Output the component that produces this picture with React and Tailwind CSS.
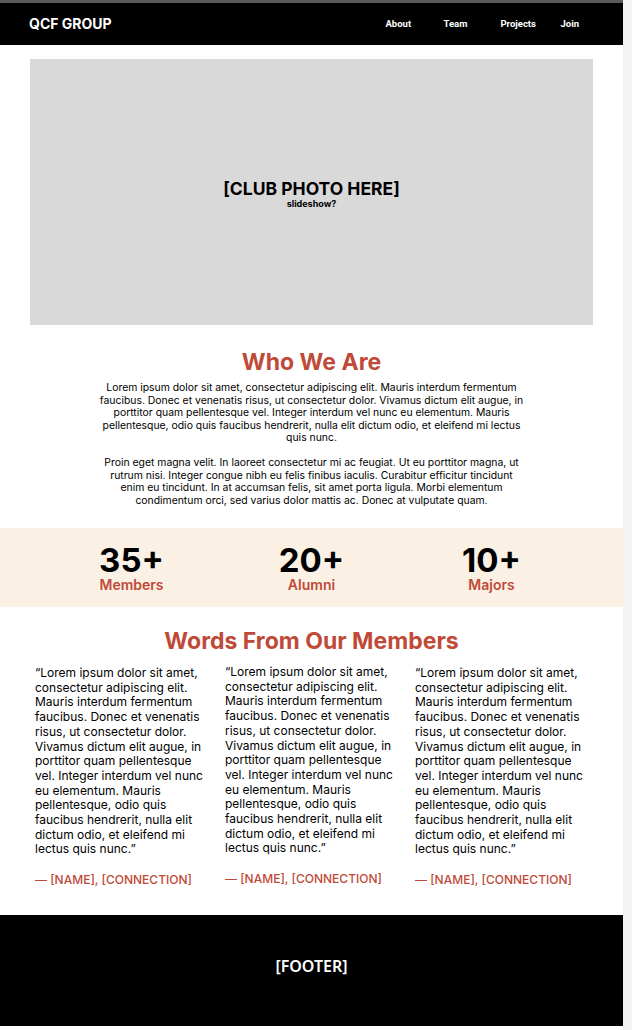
const NAV = [
  { label: 'About', w: 'w-[58px]' },
  { label: 'Team', w: 'w-[57px]' },
  { label: 'Projects', w: 'w-[60px]' },
  { label: 'Join', w: '' },
]

const STATS = [
  { value: '35+', label: 'Members' },
  { value: '20+', label: 'Alumni' },
  { value: '10+', label: 'Majors' },
]

const QUOTE =
  '\u201CLorem ipsum dolor sit amet, consectetur adipiscing elit. Mauris interdum fermentum faucibus. Donec et venenatis risus, ut consectetur dolor. Vivamus dictum elit augue, in porttitor quam pellentesque vel. Integer interdum vel nunc eu elementum. Mauris pellentesque, odio quis faucibus hendrerit, nulla elit dictum odio, et eleifend mi lectus quis nunc.\u201D'

export default function App() {
  return (
    <div className="flex w-[632px] h-[1030px] bg-[#f3f3f3] font-['Inter',sans-serif]">
      <div className="flex w-[623px] flex-col bg-white">
        <div className="h-[3px] bg-[#5a5a5a]" />
        <header className="flex h-[42px] items-center bg-black pl-[29px] pr-[44px] pb-[2px]">
          <span className="text-[14px] font-bold text-white">QCF GROUP</span>
          <nav className="ml-auto mt-[2px] flex items-center font-['Roboto',sans-serif] text-[9.5px] font-bold text-white">
            {NAV.map((n) => (
              <a key={n.label} href="#" className={n.w}>
                {n.label}
              </a>
            ))}
          </nav>
        </header>

        <div className="mx-[30px] mt-[14px] flex h-[266px] flex-col items-center justify-center bg-[#d9d9d9] pt-[2px]">
          <p className="text-[17.5px] font-bold leading-[20px] text-black">[CLUB PHOTO HERE]</p>
          <p className="text-[9px] font-bold leading-[9px] text-black">slideshow?</p>
        </div>

        <section className="mt-[22px] flex flex-col items-center px-[98px]">
          <h2 className="text-[23px] font-bold leading-[30px] text-[#c04a38]">Who We Are</h2>
          <div className="mt-[5px] text-center text-[10.4px] leading-[12.5px] text-black">
            <p>
              Lorem ipsum dolor sit amet, consectetur adipiscing elit. Mauris interdum fermentum
              faucibus. Donec et venenatis risus, ut consectetur dolor. Vivamus dictum elit augue, in
              porttitor quam pellentesque vel. Integer interdum vel nunc eu elementum. Mauris
              pellentesque, odio quis faucibus hendrerit, nulla elit dictum odio, et eleifend mi lectus
              quis nunc.
            </p>
            <p className="mt-[12.5px]">
              Proin eget magna velit. In laoreet consectetur mi ac feugiat. Ut eu porttitor magna, ut
              rutrum nisi. Integer congue nibh eu felis finibus iaculis. Curabitur efficitur tincidunt
              enim eu tincidunt. In at accumsan felis, sit amet porta ligula. Morbi elementum
              condimentum orci, sed varius dolor mattis ac. Donec at vulputate quam.
            </p>
          </div>
        </section>

        <section className="mt-[21px] flex h-[79px] items-center justify-center bg-[#faf0e3]">
          <div className="grid w-[540px] grid-cols-3 pt-[1px]">
            {STATS.map((s) => (
              <div key={s.label} className="flex flex-col items-center">
                <span className="text-[33px] font-bold leading-[33px] text-black">{s.value}</span>
                <span className="text-[14px] font-semibold leading-[16px] text-[#c04a38]">{s.label}</span>
              </div>
            ))}
          </div>
        </section>

        <section className="flex flex-col items-center pt-[19px]">
          <h2 className="text-[23px] font-bold leading-[30px] text-[#c04a38]">Words From Our Members</h2>
          <div className="mt-[10px] grid w-full grid-cols-3 gap-[18px] pl-[35px] pr-[36px]">
            {[0, 1, 2].map((i) => (
              <figure key={i} className={i === 1 ? '-mt-px' : ''}>
                <blockquote className="text-[12px] leading-[14.7px] text-black">{QUOTE}</blockquote>
                <figcaption className="mt-[14px] text-[12px] font-medium uppercase text-[#c04a38]">
                  — [Name], [Connection]
                </figcaption>
              </figure>
            ))}
          </div>
        </section>

        <footer className="mt-auto mb-[4px] flex h-[111px] items-center justify-center bg-black pb-[10px]">
          <span className="font-['Noto_Sans',sans-serif] text-[16px] font-semibold text-white">[FOOTER]</span>
        </footer>
      </div>
    </div>
  )
}
